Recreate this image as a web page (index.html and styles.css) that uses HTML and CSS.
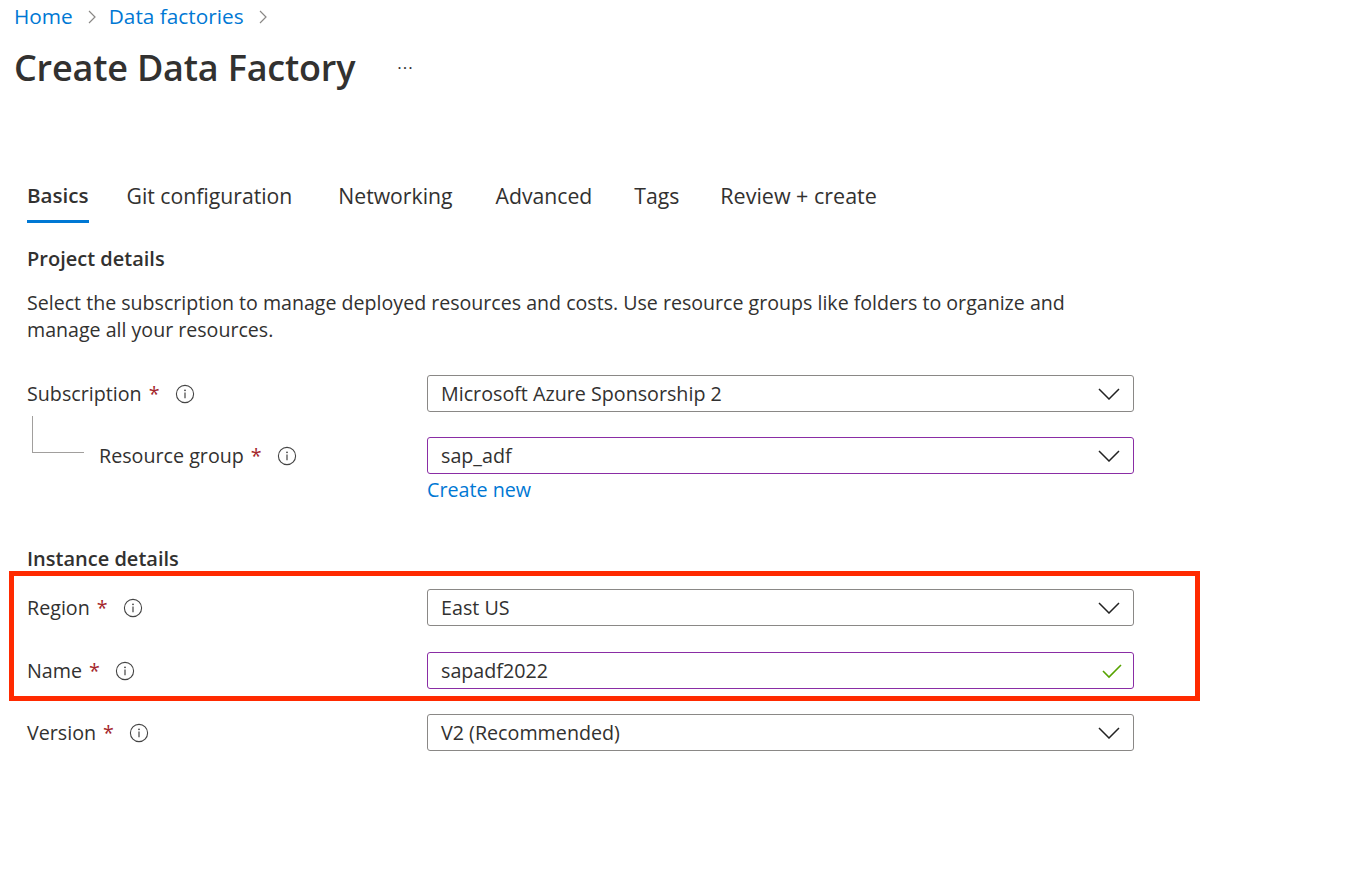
FILE: index.html
```html
<!DOCTYPE html>
<html lang="en">
<head>
<meta charset="utf-8">
<title>Create Data Factory</title>
<link rel="stylesheet" href="styles.css">
</head>
<body>
<div class="page">
  <nav class="breadcrumb">
    <a class="crumb" href="#">Home</a>
    <svg class="sep" width="10" height="14" viewBox="0 0 10 14"><path d="M2 1 L8 7 L2 13" fill="none" stroke="#8a8886" stroke-width="1.2"/></svg>
    <a class="crumb" href="#">Data factories</a>
    <svg class="sep" width="10" height="14" viewBox="0 0 10 14"><path d="M2 1 L8 7 L2 13" fill="none" stroke="#8a8886" stroke-width="1.2"/></svg>
  </nav>
  <header class="title-row">
    <h1 class="title">Create Data Factory</h1>
    <span class="more">···</span>
  </header>

  <div class="content">
    <div class="tabs">
      <span class="tab active">Basics</span>
      <span class="tab tab-git">Git configuration</span>
      <span class="tab tab-net">Networking</span>
      <span class="tab tab-adv">Advanced</span>
      <span class="tab tab-tags">Tags</span>
      <span class="tab tab-review">Review + create</span>
    </div>

    <h2 class="section">Project details</h2>
    <p class="desc">Select the subscription to manage deployed resources and costs. Use resource groups like folders to organize and manage all your resources.</p>

    <div class="row first">
      <div class="label"><span>Subscription</span><span class="req">*</span><svg class="info" width="20" height="20" viewBox="0 0 20 20"><circle cx="10" cy="10" r="8.6" fill="none" stroke="#444" stroke-width="1.1"/><circle cx="10" cy="6.3" r="0.9" fill="#444"/><path d="M10 8.6 V14.2" stroke="#444" stroke-width="1.2"/></svg></div>
      <div class="field">
        <div class="select"><span>Microsoft Azure Sponsorship 2</span><svg class="chev" width="22" height="12" viewBox="0 0 22 12"><path d="M1 1 L11 11 L21 1" fill="none" stroke="#222" stroke-width="1.5"/></svg></div>
      </div>
    </div>

    <div class="row sub">
      <div class="label indent"><span class="tree"></span><span>Resource group</span><span class="req">*</span><svg class="info" width="20" height="20" viewBox="0 0 20 20"><circle cx="10" cy="10" r="8.6" fill="none" stroke="#444" stroke-width="1.1"/><circle cx="10" cy="6.3" r="0.9" fill="#444"/><path d="M10 8.6 V14.2" stroke="#444" stroke-width="1.2"/></svg></div>
      <div class="field">
        <div class="select purple"><span>sap_adf</span><svg class="chev" width="22" height="12" viewBox="0 0 22 12"><path d="M1 1 L11 11 L21 1" fill="none" stroke="#222" stroke-width="1.5"/></svg></div>
        <a class="link" href="#">Create new</a>
      </div>
    </div>

    <h2 class="section instance">Instance details</h2>

    <div class="highlight">
      <div class="row">
        <div class="label"><span>Region</span><span class="req">*</span><svg class="info" width="20" height="20" viewBox="0 0 20 20"><circle cx="10" cy="10" r="8.6" fill="none" stroke="#444" stroke-width="1.1"/><circle cx="10" cy="6.3" r="0.9" fill="#444"/><path d="M10 8.6 V14.2" stroke="#444" stroke-width="1.2"/></svg></div>
        <div class="field">
          <div class="select"><span>East US</span><svg class="chev" width="22" height="12" viewBox="0 0 22 12"><path d="M1 1 L11 11 L21 1" fill="none" stroke="#222" stroke-width="1.5"/></svg></div>
        </div>
      </div>
      <div class="row">
        <div class="label"><span>Name</span><span class="req">*</span><svg class="info" width="20" height="20" viewBox="0 0 20 20"><circle cx="10" cy="10" r="8.6" fill="none" stroke="#444" stroke-width="1.1"/><circle cx="10" cy="6.3" r="0.9" fill="#444"/><path d="M10 8.6 V14.2" stroke="#444" stroke-width="1.2"/></svg></div>
        <div class="field">
          <div class="select purple"><span>sapadf2022</span><svg class="check" width="20" height="16" viewBox="0 0 20 16"><path d="M1 8 L7 14 L19 2" fill="none" stroke="#57a300" stroke-width="1.6"/></svg></div>
        </div>
      </div>
    </div>

    <div class="row after">
      <div class="label"><span>Version</span><span class="req">*</span><svg class="info" width="20" height="20" viewBox="0 0 20 20"><circle cx="10" cy="10" r="8.6" fill="none" stroke="#444" stroke-width="1.1"/><circle cx="10" cy="6.3" r="0.9" fill="#444"/><path d="M10 8.6 V14.2" stroke="#444" stroke-width="1.2"/></svg></div>
      <div class="field">
        <div class="select"><span>V2 (Recommended)</span><svg class="chev" width="22" height="12" viewBox="0 0 22 12"><path d="M1 1 L11 11 L21 1" fill="none" stroke="#222" stroke-width="1.5"/></svg></div>
      </div>
    </div>
  </div>
</div>
</body>
</html>
```

FILE: styles.css
```css
* { box-sizing: border-box; }
html, body { margin: 0; padding: 0; background: #fff; }
body {
  font-family: "Open Sans", "Noto Sans", "Liberation Sans", sans-serif;
  color: #323130;
  font-size: 19.7px;
}
.page { padding: 0 0 0 14px; width: 1372px; height: 872px; }

.breadcrumb {
  display: flex;
  align-items: center;
  height: 32px;
}
.crumb { color: #0078d4; text-decoration: none; font-size: 20.8px; }
.sep { margin: 2px 12px 0 14px; }

.title-row {
  display: flex;
  align-items: center;
  height: 72px;
  margin-top: -1px;
}
.title {
  margin: 0;
  font-size: 36px;
  font-weight: 600;
  color: #323130;
  letter-spacing: -0.2px;
}
.more {
  margin-left: 42px;
  font-size: 17px;
  color: #323130;
  letter-spacing: 1px;
}

.content { padding-left: 13px; }

.tabs {
  display: flex;
  margin-top: 78px;
}
.tab {
  display: flex;
  align-items: center;
  height: 29px;
  line-height: 29px;
  box-sizing: content-box;
  padding-bottom: 10px;
  margin-right: 42px;
  font-size: 21.2px;
  color: #323130;
  border-bottom: 3px solid transparent;
}
.tab.active {
  font-weight: 600;
  font-size: 20.6px;
  margin-right: 38px;
  border-bottom-color: #0078d4;
}
.tab-git { margin-right: 46px; }
.tab-net { margin-right: 43px; }
.tab-adv { margin-right: 42px; }
.tab-tags { margin-right: 41px; }
.tab-review { font-size: 21.5px; }

.section {
  margin: 0;
  font-size: 20px;
  font-weight: 600;
  line-height: 28px;
  margin-top: 22px;
}
.desc {
  margin: 16px 0 0 0;
  line-height: 27px;
  max-width: 1070px;
  font-size: 19.6px;
}

.row {
  display: flex;
  align-items: flex-start;
  margin-top: 25px;
}
.row.first { margin-top: 32px; }
.label {
  width: 400px;
  height: 37px;
  display: flex;
  align-items: center;
  flex-shrink: 0;
}
.req { color: #a4262c; margin-left: 7px; }
.info { margin-left: 15px; }
.label.indent { padding-left: 5px; }
.tree {
  width: 52px;
  height: 37px;
  border-left: 1px solid #a19f9d;
  border-bottom: 1px solid #a19f9d;
  margin-top: -21px;
  margin-right: 15px;
  align-self: flex-start;
}
.field { display: flex; flex-direction: column; }
.select {
  width: 707px;
  height: 37px;
  border: 1px solid #8a8886;
  border-radius: 3px;
  display: flex;
  align-items: center;
  justify-content: space-between;
  padding: 0 13px 0 13px;
  color: #323130;
}
.select.purple { border-color: #8a2da5; }
.chev { margin-right: 0; }
.check { margin-right: -2px; margin-top: 0; }
.link {
  color: #0078d4;
  text-decoration: none;
  line-height: 32px;
}

.section.instance { margin-top: 39px; }

.highlight {
  border: 5px solid #ff2a00;
  margin: -2px 0 0 -18px;
  width: 1191px;
  padding: 13px 0 7px 13px;
}
.highlight .row:first-child { margin-top: 0; }
.highlight .row + .row { margin-top: 26px; }
.row.after { margin-top: 13px; }
```
